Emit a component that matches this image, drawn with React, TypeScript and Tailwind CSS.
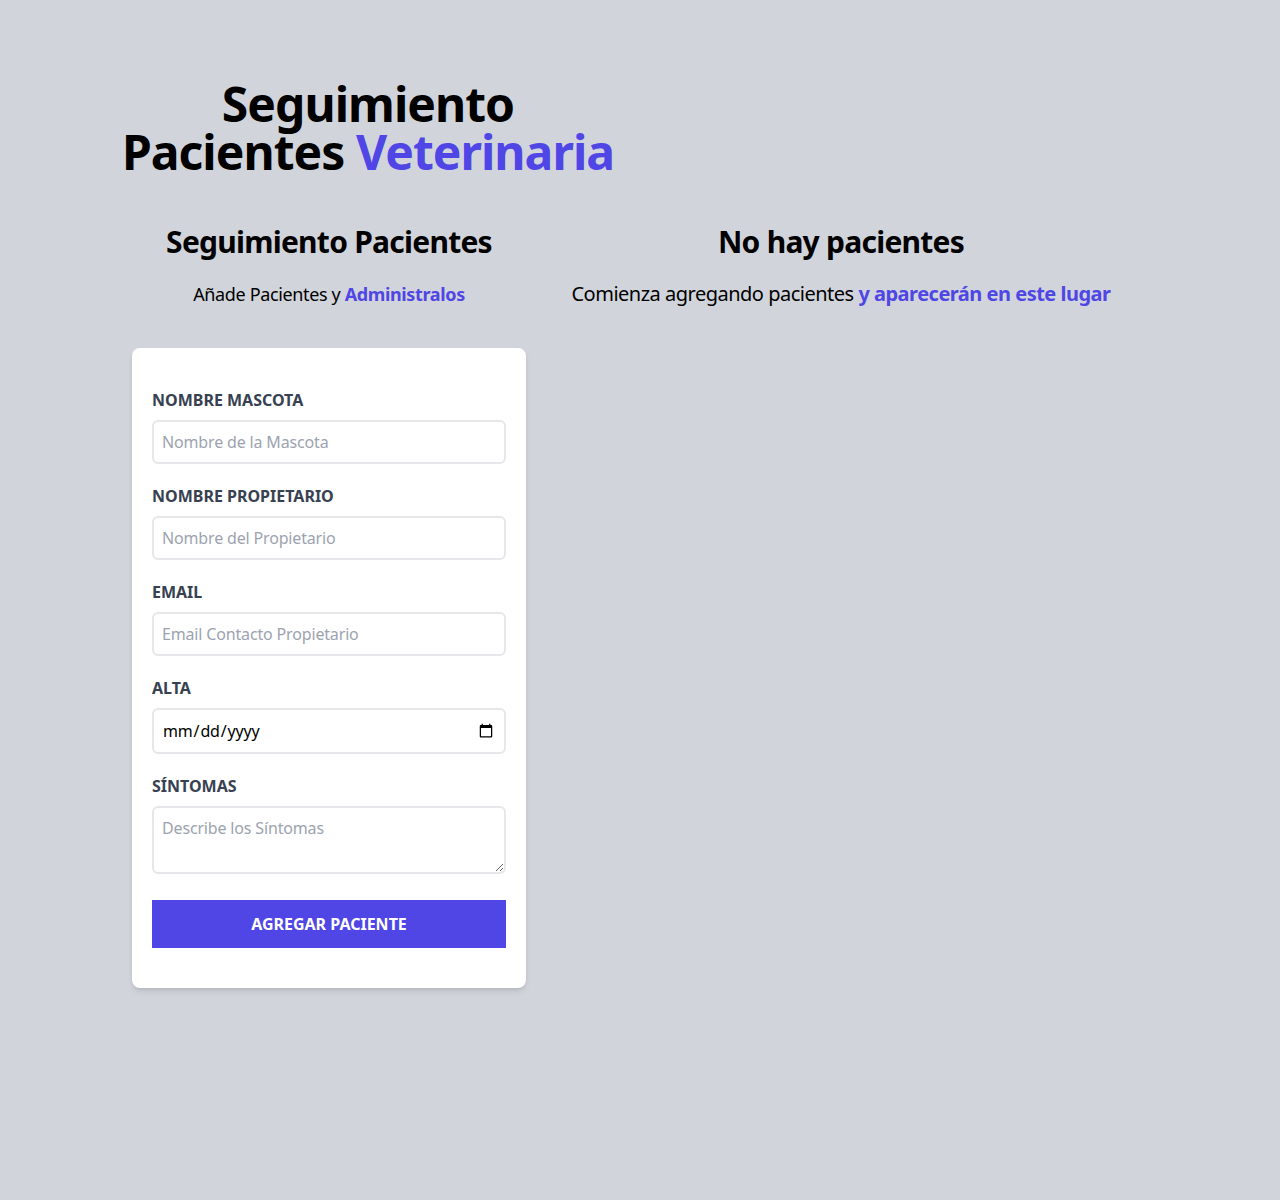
import { useState } from "react";

const font = { fontFamily: '"Noto Sans", "Open Sans", sans-serif' };

function Field({ label, id, children }: { label: string; id: string; children: React.ReactNode }) {
    return (
        <div className="mb-5">
            <label htmlFor={id} className="block text-[#374151] uppercase font-bold">
                {label}
            </label>
            {children}
        </div>
    );
}

function Formulario() {
    const [nombre, setNombre] = useState("");
    const [propietario, setPropietario] = useState("");
    const [email, setEmail] = useState("");
    const [fecha, setFecha] = useState("");
    const [sintomas, setSintomas] = useState("");

    const inputCls =
        "border-2 border-[#e5e7eb] w-full p-2 mt-2 placeholder-[#9ca3af] rounded-md bg-white outline-none tracking-[-0.01em]";

    return (
        <div className="w-[434px] shrink-0">
            <h2 className="font-bold text-3xl text-center tracking-[-0.025em]">Seguimiento Pacientes</h2>
            <p className="text-lg mt-5 text-center mb-10 tracking-[-0.02em]">
                Añade Pacientes y <span className="text-[#4f46e5] font-bold">Administralos</span>
            </p>

            <form className="bg-white shadow-md rounded-lg py-10 px-5 mb-10 mx-5" onSubmit={(e) => e.preventDefault()}>
                <Field label="Nombre Mascota" id="mascota">
                    <input
                        id="mascota"
                        type="text"
                        placeholder="Nombre de la Mascota"
                        className={inputCls}
                        value={nombre}
                        onChange={(e) => setNombre(e.target.value)}
                    />
                </Field>
                <Field label="Nombre Propietario" id="propietario">
                    <input
                        id="propietario"
                        type="text"
                        placeholder="Nombre del Propietario"
                        className={inputCls}
                        value={propietario}
                        onChange={(e) => setPropietario(e.target.value)}
                    />
                </Field>
                <Field label="Email" id="email">
                    <input
                        id="email"
                        type="email"
                        placeholder="Email Contacto Propietario"
                        className={inputCls}
                        value={email}
                        onChange={(e) => setEmail(e.target.value)}
                    />
                </Field>
                <Field label="Alta" id="alta">
                    <input
                        id="alta"
                        type="date"
                        className={`${inputCls} h-[46px]`}
                        value={fecha}
                        onChange={(e) => setFecha(e.target.value)}
                    />
                </Field>
                <Field label="Síntomas" id="sintomas">
                    <textarea
                        id="sintomas"
                        placeholder="Describe los Síntomas"
                        className={inputCls}
                        value={sintomas}
                        onChange={(e) => setSintomas(e.target.value)}
                    />
                </Field>
                <input
                    type="submit"
                    value="Agregar Paciente"
                    className="bg-[#4f46e5] w-full p-3 text-white uppercase font-bold hover:bg-[#4338ca] cursor-pointer"
                />
            </form>
        </div>
    );
}

function ListadoPacientes() {
    return (
        <div className="flex-1">
            <h2 className="font-bold text-3xl text-center tracking-[-0.025em]">No hay pacientes</h2>
            <p className="text-xl mt-5 mb-10 text-center tracking-[-0.025em]">
                Comienza agregando pacientes{" "}
                <span className="text-[#4f46e5] font-bold">y aparecerán en este lugar</span>
            </p>
        </div>
    );
}

export default function App() {
    return (
        <div className="min-h-[1200px] bg-[#d1d5db] text-black" style={font}>
            <div className="pt-20 pl-[112px] pr-[144px]">
                <h1 className="font-bold text-5xl text-center w-1/2 leading-none tracking-[-0.02em]">
                    Seguimiento Pacientes <span className="text-[#4f46e5]">Veterinaria</span>
                </h1>
                <div className="mt-12 flex">
                    <Formulario />
                    <ListadoPacientes />
                </div>
            </div>
        </div>
    );
}
